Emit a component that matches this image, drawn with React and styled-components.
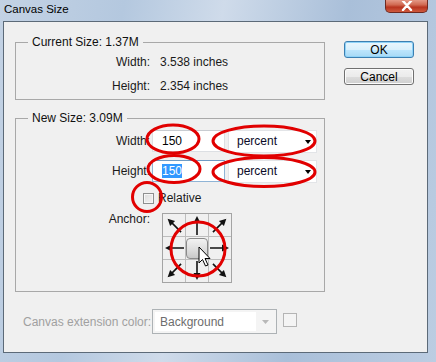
import React from 'react';
import styled, { createGlobalStyle } from 'styled-components';

const GlobalStyle = createGlobalStyle`
  html, body {
    margin: 0;
    padding: 0;
    background: #ffffff;
  }
  body {
    font-family: "Liberation Sans", Arial, sans-serif;
    font-size: 12px;
    color: #000;
  }
`;

const ANCHOR_ANGLES = [-45, 0, 45, -90, null, 90, -135, 180, 135];

const Arrow = ({ angle }) => (
  <ArrowSvg viewBox="0 0 22 22" $angle={angle}>
    <line x1="11" y1="21" x2="11" y2="8" stroke="#111" strokeWidth="1.6" />
    <polygon points="11,2 7.5,9 14.5,9" fill="#111" />
  </ArrowSvg>
);

const CanvasSizeDialog = () => {
  return (
    <Window>
      <GlobalStyle />
      <TitleBar>
        <TitleText>Canvas Size</TitleText>
        <CloseButton>
          <svg width="14" height="10" viewBox="0 0 14 10">
            <path d="M3 0 L11 9 M11 0 L3 9" stroke="#fff" strokeWidth="2.4" strokeLinecap="round" />
          </svg>
        </CloseButton>
      </TitleBar>

      <Client>
        <MainRow>
          <LeftColumn>
            <Group>
              <Legend>Current Size: 1.37M</Legend>
              <InfoRow>
                <InfoLabel>Width:</InfoLabel>
                <InfoValue>3.538 inches</InfoValue>
              </InfoRow>
              <InfoRow>
                <InfoLabel>Height:</InfoLabel>
                <InfoValue>2.354 inches</InfoValue>
              </InfoRow>
            </Group>

            <Group $second>
              <Legend>New Size: 3.09M</Legend>
              <FieldRow>
                <FieldLabel>Width:</FieldLabel>
                <TextInput>150</TextInput>
                <Select>
                  percent
                  <DropArrow />
                </Select>
              </FieldRow>
              <FieldRow $gap>
                <FieldLabel>Height:</FieldLabel>
                <TextInput $focused>
                  <Selected>150</Selected>
                </TextInput>
                <Select>
                  percent
                  <DropArrow />
                </Select>
              </FieldRow>
              <CheckRow>
                <CheckBox />
                <span>Relative</span>
              </CheckRow>
              <AnchorRow>
                <FieldLabel $anchor>Anchor:</FieldLabel>
                <AnchorGrid>
                  {ANCHOR_ANGLES.map((angle, i) => (
                    <AnchorCell key={i}>
                      {angle === null ? <AnchorCenter /> : <Arrow angle={angle} />}
                    </AnchorCell>
                  ))}
                </AnchorGrid>
              </AnchorRow>
            </Group>
          </LeftColumn>

          <ButtonColumn>
            <Button $default>OK</Button>
            <Button>Cancel</Button>
          </ButtonColumn>
        </MainRow>

        <BottomRow>
          <DisabledLabel>Canvas extension color:</DisabledLabel>
          <Combo>
            <ComboText>Background</ComboText>
            <ComboButton>
              <svg width="7" height="4" viewBox="0 0 7 4">
                <polygon points="0,0 7,0 3.5,4" fill="#b8b8b8" />
              </svg>
            </ComboButton>
          </Combo>
          <Swatch />
        </BottomRow>
      </Client>

      <Overlay viewBox="0 0 436 362" width="436" height="362">
        <g fill="none" stroke="#e10000" strokeWidth="3">
          <ellipse cx="173" cy="139" rx="26" ry="14" />
          <ellipse cx="264" cy="141" rx="51" ry="15" />
          <ellipse cx="174" cy="169" rx="26" ry="13.5" />
          <ellipse cx="264" cy="172" rx="51" ry="14.5" />
          <circle cx="147" cy="197" r="14.5" />
          <circle cx="198" cy="249" r="27" />
        </g>
        <path
          d="M199 247 L199 263 L202.5 259.5 L205.5 266 L208 265 L205 258.5 L210 258.5 Z"
          fill="#fff"
          stroke="#000"
          strokeWidth="1"
          strokeLinejoin="round"
        />
      </Overlay>
    </Window>
  );
};

const Window = styled.div`
  position: relative;
  width: 436px;
  height: 362px;
  overflow: hidden;
  display: flex;
  flex-direction: column;
  background: linear-gradient(100deg, #c3d2e4 0%, #b4c8df 25%, #cfdbea 45%, #a9bfd9 70%, #bccde2 100%);
`;

const TitleBar = styled.div`
  height: 21px;
  display: flex;
  align-items: flex-start;
  justify-content: space-between;
  padding-left: 4px;
  flex-shrink: 0;
`;

const TitleText = styled.div`
  font-size: 11.5px;
  line-height: 18px;
  color: #000;
`;

const CloseButton = styled.div`
  width: 43px;
  height: 13px;
  margin-right: 8px;
  border: 1px solid #6e2a22;
  border-top: none;
  border-radius: 0 0 5px 5px;
  background: linear-gradient(#e49886 0%, #d16a52 40%, #b8341f 60%, #cf5a3e 100%);
  display: flex;
  align-items: center;
  justify-content: center;
  box-sizing: border-box;
`;

const Client = styled.div`
  margin: 0 8px 0 3px;
  height: 332px;
  box-sizing: border-box;
  border: 1px solid #5c6a78;
  background: #f0f0f0;
  padding: 13px 12px 0 11px;
  display: flex;
  flex-direction: column;
`;

const MainRow = styled.div`
  display: flex;
  gap: 19px;
`;

const LeftColumn = styled.div`
  width: 310px;
  display: flex;
  flex-direction: column;
`;

const Group = styled.fieldset`
  margin: ${props => (props.$second ? '11px' : '0')} 0 0 0;
  padding: ${props => (props.$second ? '5px 0 8px 0' : '1px 0 1px 0')};
  border: 1px solid #a8a8a8;
  min-width: 0;
`;

const Legend = styled.legend`
  margin-left: 12px;
  padding: 0 4px 0 4px;
  font-size: 12px;
  line-height: 14px;
  color: #101010;
`;

const InfoRow = styled.div`
  display: flex;
  align-items: center;
  height: 24px;
`;

const InfoLabel = styled.div`
  width: 134px;
  text-align: right;
  color: #1a1a1a;
`;

const InfoValue = styled.div`
  margin-left: 10px;
  color: #1a1a1a;
`;

const FieldRow = styled.div`
  display: flex;
  align-items: center;
  height: 22px;
  margin-top: ${props => (props.$gap ? '8px' : '0')};
`;

const FieldLabel = styled.div`
  width: 134px;
  text-align: right;
  color: #1a1a1a;
  align-self: ${props => (props.$anchor ? 'flex-start' : 'center')};
  line-height: ${props => (props.$anchor ? '12px' : 'normal')};
`;

const TextInput = styled.div`
  margin-left: 2px;
  width: 73px;
  height: 22px;
  box-sizing: border-box;
  background: #fff;
  border: 1px solid ${props => (props.$focused ? '#8fb4d6' : '#dcdfe3')};
  border-top-color: ${props => (props.$focused ? '#6f9bc4' : '#c8ccd1')};
  padding-left: 9px;
  display: flex;
  align-items: center;
  font-size: 12px;
`;

const Selected = styled.span`
  background: #3399ff;
  color: #fff;
  line-height: 14px;
`;

const Select = styled.div`
  margin-left: 3px;
  width: 89px;
  height: 23px;
  box-sizing: border-box;
  background: #fff;
  border: 1px solid #e2e4e7;
  padding: 0 5px 0 8px;
  display: flex;
  align-items: center;
  justify-content: space-between;
  color: #0a0a28;
`;

const DropArrow = styled.span`
  width: 0;
  height: 0;
  border-left: 3px solid transparent;
  border-right: 3px solid transparent;
  border-top: 4px solid #000;
  margin-top: 2px;
`;

const CheckRow = styled.div`
  display: flex;
  align-items: center;
  height: 14px;
  margin-top: 9px;
  padding-left: 127px;
  gap: 4px;
  color: #1a1a1a;
`;

const CheckBox = styled.span`
  width: 11px;
  height: 11px;
  box-sizing: border-box;
  border: 1px solid #8e8f8f;
  background: linear-gradient(135deg, #dcdcdc 0%, #f4f4f4 100%);
  box-shadow: inset 0 0 0 1px #f6f6f6;
`;

const AnchorRow = styled.div`
  display: flex;
  margin-top: 8px;
`;

const AnchorGrid = styled.div`
  margin-left: 12px;
  display: grid;
  grid-template-columns: repeat(3, 22px);
  grid-template-rows: repeat(3, 22px);
  gap: 1px;
  border: 1px solid #a4a4a4;
  background: #bdbdbd;
`;

const AnchorCell = styled.div`
  background: #f0f0f0;
  display: flex;
  align-items: center;
  justify-content: center;
`;

const ArrowSvg = styled.svg`
  width: 22px;
  height: 22px;
  transform: rotate(${props => props.$angle}deg);
`;

const AnchorCenter = styled.div`
  width: 22px;
  height: 21px;
  box-sizing: border-box;
  border: 1px solid #8a8a8a;
  border-radius: 4px;
  background: linear-gradient(#f2f2f2 0%, #dcdcdc 60%, #c9c9c9 100%);
`;

const ButtonColumn = styled.div`
  display: flex;
  flex-direction: column;
  gap: 10px;
  margin-top: 6px;
`;

const Button = styled.div`
  width: 70px;
  height: 17px;
  box-sizing: border-box;
  border-radius: 3px;
  border: 1px solid ${props => (props.$default ? '#3c7fb1' : '#707070')};
  background: ${props =>
    props.$default
      ? 'linear-gradient(#eaf6fd 0%, #d9f0fc 50%, #bee6fd 51%, #a7d9f5 100%)'
      : 'linear-gradient(#f2f2f2 0%, #ebebeb 50%, #dddddd 51%, #cfcfcf 100%)'};
  box-shadow: inset 0 0 0 1px ${props => (props.$default ? '#8fd3f8' : '#fcfcfc')};
  display: flex;
  align-items: center;
  justify-content: center;
  font-size: 12px;
  color: #000;
`;

const BottomRow = styled.div`
  display: flex;
  align-items: center;
  margin-top: 17px;
  padding-left: 8px;
`;

const DisabledLabel = styled.div`
  color: #a0a0a0;
  width: 129px;
`;

const Combo = styled.div`
  width: 125px;
  height: 25px;
  box-sizing: border-box;
  border: 1px solid #adb2b5;
  background: #f4f4f4;
  padding: 2px;
  display: flex;
`;

const ComboText = styled.div`
  flex: 1;
  background: #fff;
  display: flex;
  align-items: center;
  padding-left: 5px;
  color: #6d6d6d;
`;

const ComboButton = styled.div`
  width: 18px;
  display: flex;
  align-items: center;
  justify-content: center;
`;

const Swatch = styled.div`
  width: 14px;
  height: 14px;
  box-sizing: border-box;
  margin-left: 6px;
  margin-top: -3px;
  border: 1px solid #b4b4b4;
  background: #f4f4f4;
`;

const Overlay = styled.svg`
  position: absolute;
  left: 0;
  top: 0;
  pointer-events: none;
`;

export default CanvasSizeDialog;
